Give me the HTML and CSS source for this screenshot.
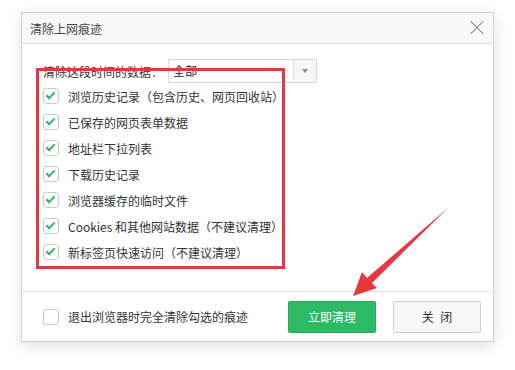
FILE: index.html
```html
<html lang="zh-CN"><head>
    <meta charset="UTF-8">
    <meta name="viewport" content="width=device-width, initial-scale=1.0">
    <title>清除上网痕迹</title>
    <link rel="stylesheet" href="styles.css">
</head>
<body>
    <div class="dialog">
        <div class="dialog-title">
            <span>清除上网痕迹</span>
            <span class="close-x"></span>
        </div>
        <div class="dialog-body">
            <div class="range-row">
                <span class="range-label">清除这段时间的数据：</span>
                <div class="select">
                    <span class="select-value">全部</span>
                    <span class="select-arrow"></span>
                </div>
            </div>
            <ul class="items">
                <li><span class="check on"></span>浏览历史记录（包含历史、网页回收站）</li>
                <li><span class="check on"></span>已保存的网页表单数据</li>
                <li><span class="check on"></span>地址栏下拉列表</li>
                <li><span class="check on"></span>下载历史记录</li>
                <li><span class="check on"></span>浏览器缓存的临时文件</li>
                <li><span class="check on"></span>Cookies 和其他网站数据（不建议清理）</li>
                <li><span class="check on"></span>新标签页快速访问（不建议清理）</li>
            </ul>
        </div>
        <div class="dialog-footer">
            <label class="exit-clear"><span class="check"></span>退出浏览器时完全清除勾选的痕迹</label>
            <button class="btn btn-green">立即清理</button>
            <button class="btn btn-plain">关 闭</button>
        </div>
    </div>

    <div class="highlight"></div>
    <svg class="arrow" width="515" height="370" viewBox="0 0 515 370">
        <polygon points="449,207 372,283 377,288 353,296 362,272 367,278" fill="#e8383d"/>
    </svg>
</body></html>
```

FILE: styles.css
```css
body {
    margin: 0;
    background: #fff;
    font-family: "Noto Sans CJK SC", "Noto Sans", sans-serif;
    font-size: 12px;
    color: #333;
}

.dialog {
    margin: 12px 0 0 21px;
    width: 471px;
    border: 1px solid #cfcfcf;
    background: #fff;
    box-shadow: 0 4px 14px rgba(0, 0, 0, 0.12);
}

.dialog-title {
    height: 30px;
    display: flex;
    align-items: center;
    justify-content: space-between;
    padding: 0 8px 0 8px;
    background: #f8f8f8;
    border-bottom: 1px solid #dedede;
    color: #444;
}
.close-x {
    position: relative;
    width: 14px;
    height: 14px;
    margin-right: 1px;
}
.close-x::before,
.close-x::after {
    content: "";
    position: absolute;
    left: -2px;
    top: 6px;
    width: 18px;
    height: 1px;
    background: #8a8a8a;
    transform: rotate(45deg);
}
.close-x::after {
    transform: rotate(-45deg);
}

.dialog-body {
    padding: 15px 21px 26px 21px;
}

.range-row {
    display: flex;
    align-items: center;
    height: 24px;
}
.range-label {
    width: 125px;
}
.select {
    display: flex;
    width: 147px;
    height: 22px;
    border: 1px solid #d6d6d6;
    background: #fff;
}
.select-value {
    flex: 1;
    padding-left: 4px;
    line-height: 22px;
    color: #222;
}
.select-arrow {
    width: 22px;
    border-left: 1px solid #e2e2e2;
    background: #f6f6f6;
    display: flex;
    align-items: center;
    justify-content: center;
}
.select-arrow::after {
    content: "";
    border-left: 3px solid transparent;
    border-right: 3px solid transparent;
    border-top: 4px solid #888;
}

.items {
    list-style: none;
    margin: 0;
    padding: 0;
}
.items li {
    height: 26px;
    display: flex;
    align-items: center;
    white-space: nowrap;
}

.check {
    width: 14px;
    height: 14px;
    border: 1px solid #c9c9c9;
    border-radius: 3px;
    background: #fff;
    margin-right: 9px;
    position: relative;
    flex: none;
}
.check.on::after {
    content: "";
    position: absolute;
    left: 4px;
    top: 1px;
    width: 3px;
    height: 7px;
    border-right: 2px solid #35b465;
    border-bottom: 2px solid #35b465;
    transform: rotate(45deg);
}

.dialog-footer {
    display: flex;
    align-items: center;
    height: 49px;
    padding: 0 12px 0 21px;
    border-top: 1px solid #e4e4e4;
}
.exit-clear {
    display: flex;
    align-items: center;
    flex: 1;
}
.btn {
    width: 88px;
    height: 32px;
    border-radius: 2px;
    font-family: inherit;
    font-size: 12px;
}
.btn-green {
    background: #2dba64;
    border: 1px solid #27a95a;
    color: #fff;
    margin-right: 17px;
}
.btn-plain {
    background: #f7f7f7;
    border: 1px solid #cfcfcf;
    color: #333;
    word-spacing: 4px;
}

.highlight {
    position: absolute;
    left: 36px;
    top: 68px;
    width: 243px;
    height: 195px;
    border: 3px solid #e23a40;
}
.arrow {
    position: absolute;
    left: 0;
    top: 0;
    pointer-events: none;
}
```
